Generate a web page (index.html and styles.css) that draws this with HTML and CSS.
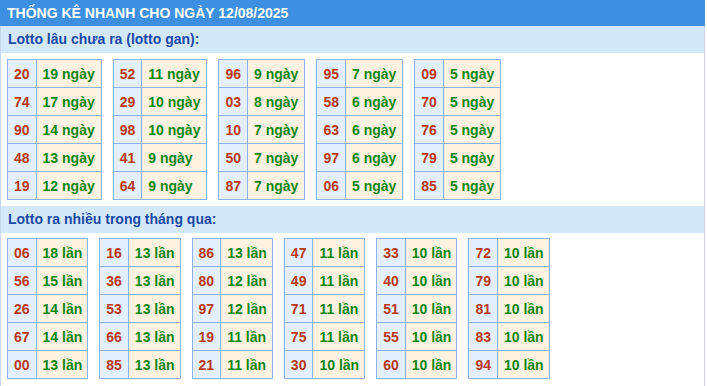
FILE: index.html
```html
<!DOCTYPE html>
<html lang="vi">
<head>
<meta charset="utf-8">
<title>Thống kê nhanh</title>
<link rel="stylesheet" href="styles.css">
</head>
<body>
<div class="box">
  <div class="title">THỐNG KÊ NHANH CHO NGÀY 12/08/2025</div>
  <div class="sub">Lotto lâu chưa ra (lotto gan):</div>
  <div class="tables first">
    <table class="t"><tr><td class="n">20</td><td class="v">19 ngày</td></tr><tr><td class="n">74</td><td class="v">17 ngày</td></tr><tr><td class="n">90</td><td class="v">14 ngày</td></tr><tr><td class="n">48</td><td class="v">13 ngày</td></tr><tr><td class="n">19</td><td class="v">12 ngày</td></tr></table>
    <table class="t"><tr><td class="n">52</td><td class="v">11 ngày</td></tr><tr><td class="n">29</td><td class="v">10 ngày</td></tr><tr><td class="n">98</td><td class="v">10 ngày</td></tr><tr><td class="n">41</td><td class="v">9 ngày</td></tr><tr><td class="n">64</td><td class="v">9 ngày</td></tr></table>
    <table class="t"><tr><td class="n">96</td><td class="v">9 ngày</td></tr><tr><td class="n">03</td><td class="v">8 ngày</td></tr><tr><td class="n">10</td><td class="v">7 ngày</td></tr><tr><td class="n">50</td><td class="v">7 ngày</td></tr><tr><td class="n">87</td><td class="v">7 ngày</td></tr></table>
    <table class="t"><tr><td class="n">95</td><td class="v">7 ngày</td></tr><tr><td class="n">58</td><td class="v">6 ngày</td></tr><tr><td class="n">63</td><td class="v">6 ngày</td></tr><tr><td class="n">97</td><td class="v">6 ngày</td></tr><tr><td class="n">06</td><td class="v">5 ngày</td></tr></table>
    <table class="t"><tr><td class="n">09</td><td class="v">5 ngày</td></tr><tr><td class="n">70</td><td class="v">5 ngày</td></tr><tr><td class="n">76</td><td class="v">5 ngày</td></tr><tr><td class="n">79</td><td class="v">5 ngày</td></tr><tr><td class="n">85</td><td class="v">5 ngày</td></tr></table>
  </div>
  <div class="sub">Lotto ra nhiều trong tháng qua:</div>
  <div class="tables second">
    <table class="t"><tr><td class="n">06</td><td class="v">18 lần</td></tr><tr><td class="n">56</td><td class="v">15 lần</td></tr><tr><td class="n">26</td><td class="v">14 lần</td></tr><tr><td class="n">67</td><td class="v">14 lần</td></tr><tr><td class="n">00</td><td class="v">13 lần</td></tr></table>
    <table class="t"><tr><td class="n">16</td><td class="v">13 lần</td></tr><tr><td class="n">36</td><td class="v">13 lần</td></tr><tr><td class="n">53</td><td class="v">13 lần</td></tr><tr><td class="n">66</td><td class="v">13 lần</td></tr><tr><td class="n">85</td><td class="v">13 lần</td></tr></table>
    <table class="t"><tr><td class="n">86</td><td class="v">13 lần</td></tr><tr><td class="n">80</td><td class="v">12 lần</td></tr><tr><td class="n">97</td><td class="v">12 lần</td></tr><tr><td class="n">19</td><td class="v">11 lần</td></tr><tr><td class="n">21</td><td class="v">11 lần</td></tr></table>
    <table class="t"><tr><td class="n">47</td><td class="v">11 lần</td></tr><tr><td class="n">49</td><td class="v">11 lần</td></tr><tr><td class="n">71</td><td class="v">11 lần</td></tr><tr><td class="n">75</td><td class="v">11 lần</td></tr><tr><td class="n">30</td><td class="v">10 lần</td></tr></table>
    <table class="t"><tr><td class="n">33</td><td class="v">10 lần</td></tr><tr><td class="n">40</td><td class="v">10 lần</td></tr><tr><td class="n">51</td><td class="v">10 lần</td></tr><tr><td class="n">55</td><td class="v">10 lần</td></tr><tr><td class="n">60</td><td class="v">10 lần</td></tr></table>
    <table class="t"><tr><td class="n">72</td><td class="v">10 lần</td></tr><tr><td class="n">79</td><td class="v">10 lần</td></tr><tr><td class="n">81</td><td class="v">10 lần</td></tr><tr><td class="n">83</td><td class="v">10 lần</td></tr><tr><td class="n">94</td><td class="v">10 lần</td></tr></table>
  </div>
</div>
</body>
</html>
```

FILE: styles.css
```css
html, body {
  margin: 0;
  padding: 0;
  background: #ffffff;
}
body {
  font-family: "Liberation Sans", Arial, sans-serif;
}
.box {
  width: 705px;
  box-sizing: border-box;
  border-left: 1px solid #c6d6ec;
  border-right: 1px solid #c6d6ec;
  min-height: 386px;
}
.title {
  height: 26px;
  line-height: 27px;
  margin: 0 -1px;
  padding-left: 7px;
  background: #3d8fe1;
  color: #ffffff;
  font-weight: bold;
  font-size: 14px;
}
.sub {
  height: 27px;
  line-height: 27px;
  padding-left: 7px;
  background: #d4e8fc;
  color: #1b4aa6;
  font-weight: bold;
  font-size: 14px;
}
.tables {
  display: flex;
  align-items: flex-start;
  gap: 11px;
  padding: 6px 6px;
}
.second {
  padding-top: 5px;
}
.second .v {
  padding: 0 5px 0 6px;
}
.t {
  border-collapse: collapse;
  font-size: 14px;
  font-weight: bold;
}
.t td {
  border: 1px solid #8bb2ef;
  height: 28px;
  padding: 0 6px;
  box-sizing: border-box;
  white-space: nowrap;
  line-height: 16px;
}
.n {
  background: #e4effd;
  color: #b8391a;
  text-align: center;
}
.v {
  background: #fef3e1;
  color: #118612;
}
```
